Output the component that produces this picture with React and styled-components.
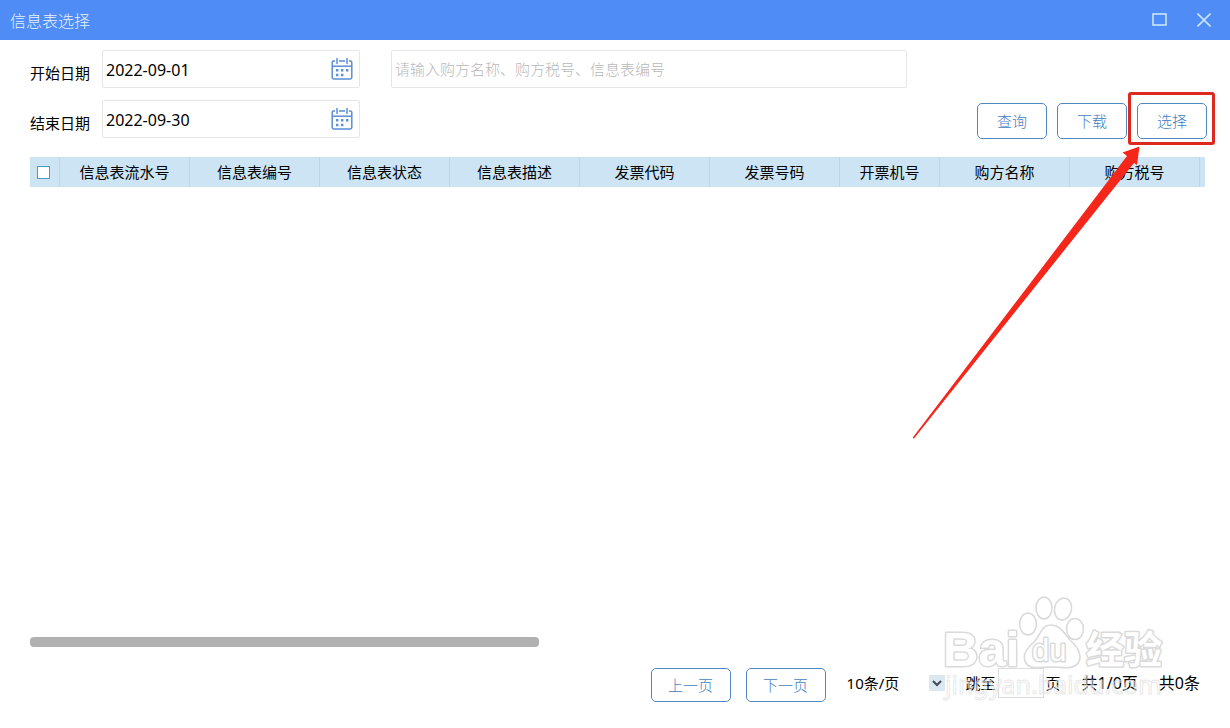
import React, { useState } from 'react';
import styled, { createGlobalStyle } from 'styled-components';

const GlobalStyle = createGlobalStyle`
  * {
    box-sizing: border-box;
  }

  body {
    margin: 0;
    background: #fff;
    color: #000;
    font-family: 'Noto Sans', 'Noto Sans CJK SC', sans-serif;
    font-size: 15px;
    line-height: 20px;
  }

  button, input, select {
    margin: 0;
    font: inherit;
    color: inherit;
  }
`;

const Window = styled.div`
  position: relative;
  display: flex;
  flex-direction: column;
  min-height: 100vh;
`;

const TitleBar = styled.header`
  display: flex;
  align-items: center;
  justify-content: space-between;
  height: 40px;
  padding: 0 16px 0 10px;
  background: #4f8cf5;
  color: #e6f3ff;
`;

const Title = styled.h1`
  margin: 0;
  padding-top: 2px;
  font-size: 16px;
  font-weight: 300;
`;

const WindowControls = styled.div`
  display: flex;
  gap: 24px;
`;

const IconButton = styled.button`
  display: flex;
  align-items: center;
  justify-content: center;
  width: ${(props) => props.$size}px;
  height: ${(props) => props.$size}px;
  padding: 0;
  border: 0;
  background: transparent;
  color: ${(props) => props.$color};
  cursor: pointer;
`;

const Content = styled.main`
  flex: 1;
  display: flex;
  flex-direction: column;
  padding: 10px 25px 26px 30px;
`;

const Filters = styled.form`
  display: flex;
  align-items: flex-start;
  margin: 0 -2px 18px 0;
`;

const DateFields = styled.div`
  display: flex;
  flex-direction: column;
  gap: 12px;
  margin-right: 31px;
`;

const DateRow = styled.div`
  display: flex;
  align-items: center;
  gap: 12px;
`;

const FieldLabel = styled.label`
  padding-top: 8px;
`;

const DateBox = styled.div`
  display: flex;
  align-items: center;
  width: 258px;
  height: 38px;
  padding: 0 5px 0 0;
  border: 1px solid #e6e6e6;
  border-radius: 2px;
`;

const DateInput = styled.input`
  flex: 1;
  min-width: 0;
  padding: 2px 3px 0;
  border: 0;
  outline: 0;
  background: transparent;
  font-size: 16px;
`;

const SearchInput = styled.input`
  flex: 0 1 516px;
  min-width: 0;
  height: 38px;
  padding: 0 3px;
  border: 1px solid #e6e6e6;
  border-radius: 2px;
  outline: 0;
  font-weight: 300;

  &::placeholder {
    color: #b8b8b8;
    opacity: 1;
  }
`;

const Actions = styled.div`
  display: flex;
  gap: 10px;
  margin: 53px 0 0 auto;
`;

const Button = styled.button`
  width: ${(props) => props.$width}px;
  height: ${(props) => props.$height}px;
  padding: 0;
  border: 1px solid #5089c0;
  border-radius: 5px;
  background: #fff;
  color: #3f7dc0;
  font-weight: 300;
  cursor: pointer;

  &:hover {
    background: #f0f7ff;
  }
`;

const Marked = styled.div`
  position: relative;
`;

const MarkFrame = styled.div`
  position: absolute;
  top: -11px;
  right: -8px;
  bottom: -6px;
  left: -9px;
  border: 3px solid #dc2a20;
  border-radius: 3px;
  pointer-events: none;
`;

const MarkArrow = styled.svg`
  position: absolute;
  top: 43px;
  left: -225px;
  pointer-events: none;
`;

const TableArea = styled.div`
  flex: 1;
  overflow: hidden;
`;

const Table = styled.table`
  width: 100%;
  border-spacing: 0;
  table-layout: fixed;
  background: #cde4f4;
`;

const HeadCell = styled.th`
  width: ${(props) => (props.$width ? `${props.$width}px` : 'auto')};
  height: 30px;
  padding: 0;
  border-right: ${(props) => (props.$last ? '0' : '1px solid #c2d4e0')};
  font-weight: 400;
  text-align: center;
  white-space: nowrap;
`;

const Checkbox = styled.input`
  appearance: none;
  display: block;
  width: 13px;
  height: 13px;
  margin: 0 auto 0 7px;
  border: 1px solid #4d9cbd;
  background: #fff;

  &:checked {
    background: #4d9cbd;
  }
`;

const ScrollTrack = styled.div`
  height: 10px;
  margin-bottom: 21px;
`;

const ScrollThumb = styled.div`
  width: 43.3%;
  height: 10px;
  border-radius: 4px;
  background: #b1b1b1;
`;

const Pager = styled.nav`
  display: flex;
  align-items: flex-start;
  justify-content: flex-end;
  padding-right: 5px;
`;

const PagerButtons = styled.div`
  display: flex;
  gap: 15px;
  margin-right: 21px;
`;

const PagerInfo = styled.div`
  display: flex;
  align-items: center;
`;

const PageSize = styled.div`
  position: relative;
  width: 98px;
  margin-right: 21px;
`;

const PageSizeSelect = styled.select`
  appearance: none;
  display: block;
  width: 100%;
  padding: 0;
  border: 0;
  outline: 0;
  background: transparent;
`;

const SelectArrow = styled.span`
  position: absolute;
  top: 2px;
  right: 0;
  display: flex;
  align-items: center;
  justify-content: center;
  width: 16px;
  height: 16px;
  background: #dbe8f2;
  pointer-events: none;
`;

const JumpInput = styled.input`
  width: 46px;
  height: 30px;
  margin: 0 2px;
  border: 1px solid #dcdcdc;
  outline: 0;
  text-align: center;
`;

const PagerText = styled.span`
  margin-left: 21px;
  font-size: 16px;
`;

const Watermark = styled.svg`
  position: absolute;
  right: 50px;
  bottom: 18px;
  pointer-events: none;
`;

const columns = [
  { title: '信息表流水号', width: 130 },
  { title: '信息表编号', width: 130 },
  { title: '信息表状态', width: 130 },
  { title: '信息表描述', width: 130 },
  { title: '发票代码', width: 130 },
  { title: '发票号码', width: 130 },
  { title: '开票机号', width: 100 },
  { title: '购方名称', width: 130 },
  { title: '购方税号', width: 130 },
];

const CalendarIcon = () => (
  <svg width="22" height="24" viewBox="0 0 22 24" fill="none" stroke="#5b8fd6" strokeWidth="1.5">
    <path d="M4 4H2.6Q1.2 4 1.2 5.4V20.6Q1.2 22 2.6 22H19.4Q20.8 22 20.8 20.6V5.4Q20.8 4 19.4 4H18M8 4H14" />
    <path d="M1.2 9.2H20.8" />
    <path d="M6 1.5V6.5M16 1.5V6.5" strokeLinecap="round" />
    <path d="M5 13.2h2.4M10 13.2h2.4M15 13.2h2.4M5 18h2.4M10 18h2.4" strokeWidth="2.4" />
  </svg>
);

const DateField = ({ id, label, value, onChange }) => (
  <DateRow>
    <FieldLabel htmlFor={id}>{label}</FieldLabel>
    <DateBox>
      <DateInput id={id} value={value} onChange={(e) => onChange(e.target.value)} />
      <IconButton type="button" $size={24} $color="#5b8fd6" aria-label={label}>
        <CalendarIcon />
      </IconButton>
    </DateBox>
  </DateRow>
);

const BaiduWatermark = () => (
  <Watermark width="240" height="118" viewBox="0 0 240 118" aria-hidden="true">
    <g fill="#fff" fillOpacity="0.7" stroke="#dadada" strokeWidth="1.6">
      <ellipse cx="88" cy="32" rx="8.5" ry="11" />
      <ellipse cx="104" cy="16" rx="8" ry="11" />
      <ellipse cx="123" cy="17" rx="8.5" ry="11" transform="rotate(12 123 17)" />
      <ellipse cx="135" cy="37" rx="8.5" ry="10.5" />
      <path d="M111 33C121 33 124 42 131 49C140 57 142 66 138 71C133 78 124 75 112 75C99 75 90 78 86 71C81 63 87 56 94 50C101 43 101 33 111 33Z" />
    </g>
    <g
      fill="#fff"
      stroke="#dadada"
      strokeWidth="3"
      paintOrder="stroke"
      strokeLinejoin="round"
      fontFamily="'Liberation Sans', 'Noto Sans CJK SC', sans-serif"
      fontWeight="700"
    >
      <text x="3" y="74" fontSize="49">Bai</text>
      <text x="92" y="69" fontSize="31" fontWeight="400">du</text>
      <text x="146" y="71" fontSize="38">经验</text>
    </g>
    <text
      x="5"
      y="102"
      fontSize="25"
      fontFamily="'Noto Sans', sans-serif"
      fill="#fff"
      fillOpacity="0.4"
      stroke="#d8d8d8"
      strokeOpacity="0.6"
      strokeWidth="1"
    >
      jingyan.baidu.com
    </text>
  </Watermark>
);

const App = () => {
  const [startDate, setStartDate] = useState('2022-09-01');
  const [endDate, setEndDate] = useState('2022-09-30');
  const [keyword, setKeyword] = useState('');
  const [page, setPage] = useState('');

  return (
    <Window>
      <GlobalStyle />
      <TitleBar>
        <Title>信息表选择</Title>
        <WindowControls>
          <IconButton type="button" $size={20} $color="#c9e6fb" aria-label="最大化">
            <svg width="16" height="14" viewBox="0 0 16 14" fill="none" stroke="currentColor" strokeWidth="1.6">
              <rect x="1" y="1" width="13" height="11" />
            </svg>
          </IconButton>
          <IconButton type="button" $size={20} $color="#c9e6fb" aria-label="关闭">
            <svg width="14" height="14" viewBox="0 0 14 14" fill="none" stroke="currentColor" strokeWidth="1.6">
              <path d="M0.5 0.5L13.5 13.5M13.5 0.5L0.5 13.5" />
            </svg>
          </IconButton>
        </WindowControls>
      </TitleBar>

      <Content>
        <Filters onSubmit={(e) => e.preventDefault()}>
          <DateFields>
            <DateField id="start" label="开始日期" value={startDate} onChange={setStartDate} />
            <DateField id="end" label="结束日期" value={endDate} onChange={setEndDate} />
          </DateFields>
          <SearchInput
            aria-label="关键字"
            placeholder="请输入购方名称、购方税号、信息表编号"
            value={keyword}
            onChange={(e) => setKeyword(e.target.value)}
          />
          <Actions>
            <Button type="submit" $width={70} $height={36}>查询</Button>
            <Button type="button" $width={70} $height={36}>下载</Button>
            <Marked>
              <Button type="button" $width={70} $height={36}>选择</Button>
              <MarkFrame />
              <MarkArrow width="230" height="294" viewBox="0 0 230 294">
                <path
                  d="M227.5 0.5L210.5 6.5L215 10L0.8 291.5L1.8 292.8L222 17L225 19Z"
                  fill="#f5261a"
                />
              </MarkArrow>
            </Marked>
          </Actions>
        </Filters>

        <TableArea>
          <Table>
            <thead>
              <tr>
                <HeadCell $width={30}>
                  <Checkbox type="checkbox" aria-label="全选" />
                </HeadCell>
                {columns.map((column) => (
                  <HeadCell key={column.title} $width={column.width}>{column.title}</HeadCell>
                ))}
                <HeadCell $last />
              </tr>
            </thead>
          </Table>
        </TableArea>
        <ScrollTrack>
          <ScrollThumb />
        </ScrollTrack>

        <Pager>
          <PagerButtons>
            <Button type="button" $width={80} $height={34}>上一页</Button>
            <Button type="button" $width={80} $height={34}>下一页</Button>
          </PagerButtons>
          <PagerInfo>
            <PageSize>
              <PageSizeSelect aria-label="每页条数">
                <option>10条/页</option>
              </PageSizeSelect>
              <SelectArrow>
                <svg width="10" height="7" viewBox="0 0 10 7" fill="none" stroke="#3f4b57" strokeWidth="2">
                  <path d="M1 1L5 5L9 1" />
                </svg>
              </SelectArrow>
            </PageSize>
            <label htmlFor="jump">跳至</label>
            <JumpInput id="jump" value={page} onChange={(e) => setPage(e.target.value)} />
            <span>页</span>
            <PagerText>共1/0页</PagerText>
            <PagerText>共0条</PagerText>
          </PagerInfo>
        </Pager>
      </Content>
      <BaiduWatermark />
    </Window>
  );
};

export default App;
